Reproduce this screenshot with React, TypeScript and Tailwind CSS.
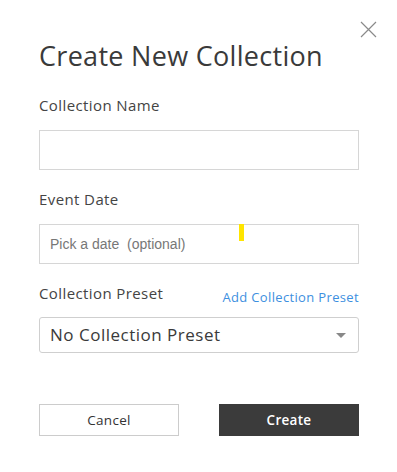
export default function App() {
  return (
    <div className="relative min-h-screen w-[397px] bg-white font-['Open_Sans',sans-serif] text-[#3b3b3b]">
      {/* Close button */}
      <button className="absolute left-[360px] top-[21px] h-[17px] w-[17px] text-[#8a8a8a]">
        <svg viewBox="0 0 17 17" className="h-[17px] w-[17px]" fill="none" stroke="currentColor" strokeWidth="1.2">
          <path d="M1 1 L16 16 M16 1 L1 16" />
        </svg>
      </button>

      <div className="flex w-[320px] flex-col pl-[39px] pt-[38px] box-content">
        <h1 className="text-[27px] leading-[36px] tracking-[0.3px] text-[#3a3a3a]">Create New Collection</h1>

        {/* Collection name */}
        <label className="mt-[21px] text-[15px] leading-[20px] tracking-[0.4px] text-[#444]">Collection Name</label>
        <input className="mt-[15px] h-[40px] w-[320px] border border-[#d6d6d6] px-[10px] outline-none" />

        {/* Event date */}
        <label className="mt-[19px] text-[15px] leading-[20px] tracking-[0.4px] text-[#444]">Event Date</label>
        <div className="relative mt-[15px]">
          <input
            placeholder="Pick a date  (optional)"
            className="h-[40px] w-[320px] border border-[#d6d6d6] px-[10px] font-['Liberation_Sans',sans-serif] text-[14px] whitespace-pre outline-none placeholder:text-[#777]"
          />
          <div className="absolute left-[200px] top-0 h-[17px] w-[5px] bg-[#ffe500]" />
        </div>

        {/* Collection preset */}
        <div className="mt-[19px] flex items-end justify-between">
          <span className="text-[15px] leading-[20px] tracking-[0.4px] text-[#444]">Collection Preset</span>
          <a className="mb-[-3px] text-[13px] leading-[18px] tracking-[0.35px] text-[#3d8fe0]">Add Collection Preset</a>
        </div>
        <div className="mt-[14px] flex h-[36px] w-[320px] items-center justify-between rounded-[3px] border border-[#cfcfcf] pl-[10px] pr-[12px]">
          <span className="text-[17px] tracking-[0.5px] text-[#3a3a3a]">No Collection Preset</span>
          <svg viewBox="0 0 10 5" className="h-[5px] w-[10px]">
            <path d="M0 0 L10 0 L5 5 Z" fill="#888" />
          </svg>
        </div>

        {/* Actions */}
        <div className="mt-[51px] flex justify-between">
          <button className="h-[32px] w-[140px] border border-[#cccccc] bg-white text-[13.5px] tracking-[0.3px] text-[#333]">Cancel</button>
          <button className="h-[32px] w-[140px] bg-[#3b3b3b] text-[13.5px] font-semibold tracking-[0.3px] text-white">Create</button>
        </div>
      </div>
    </div>
  );
}
